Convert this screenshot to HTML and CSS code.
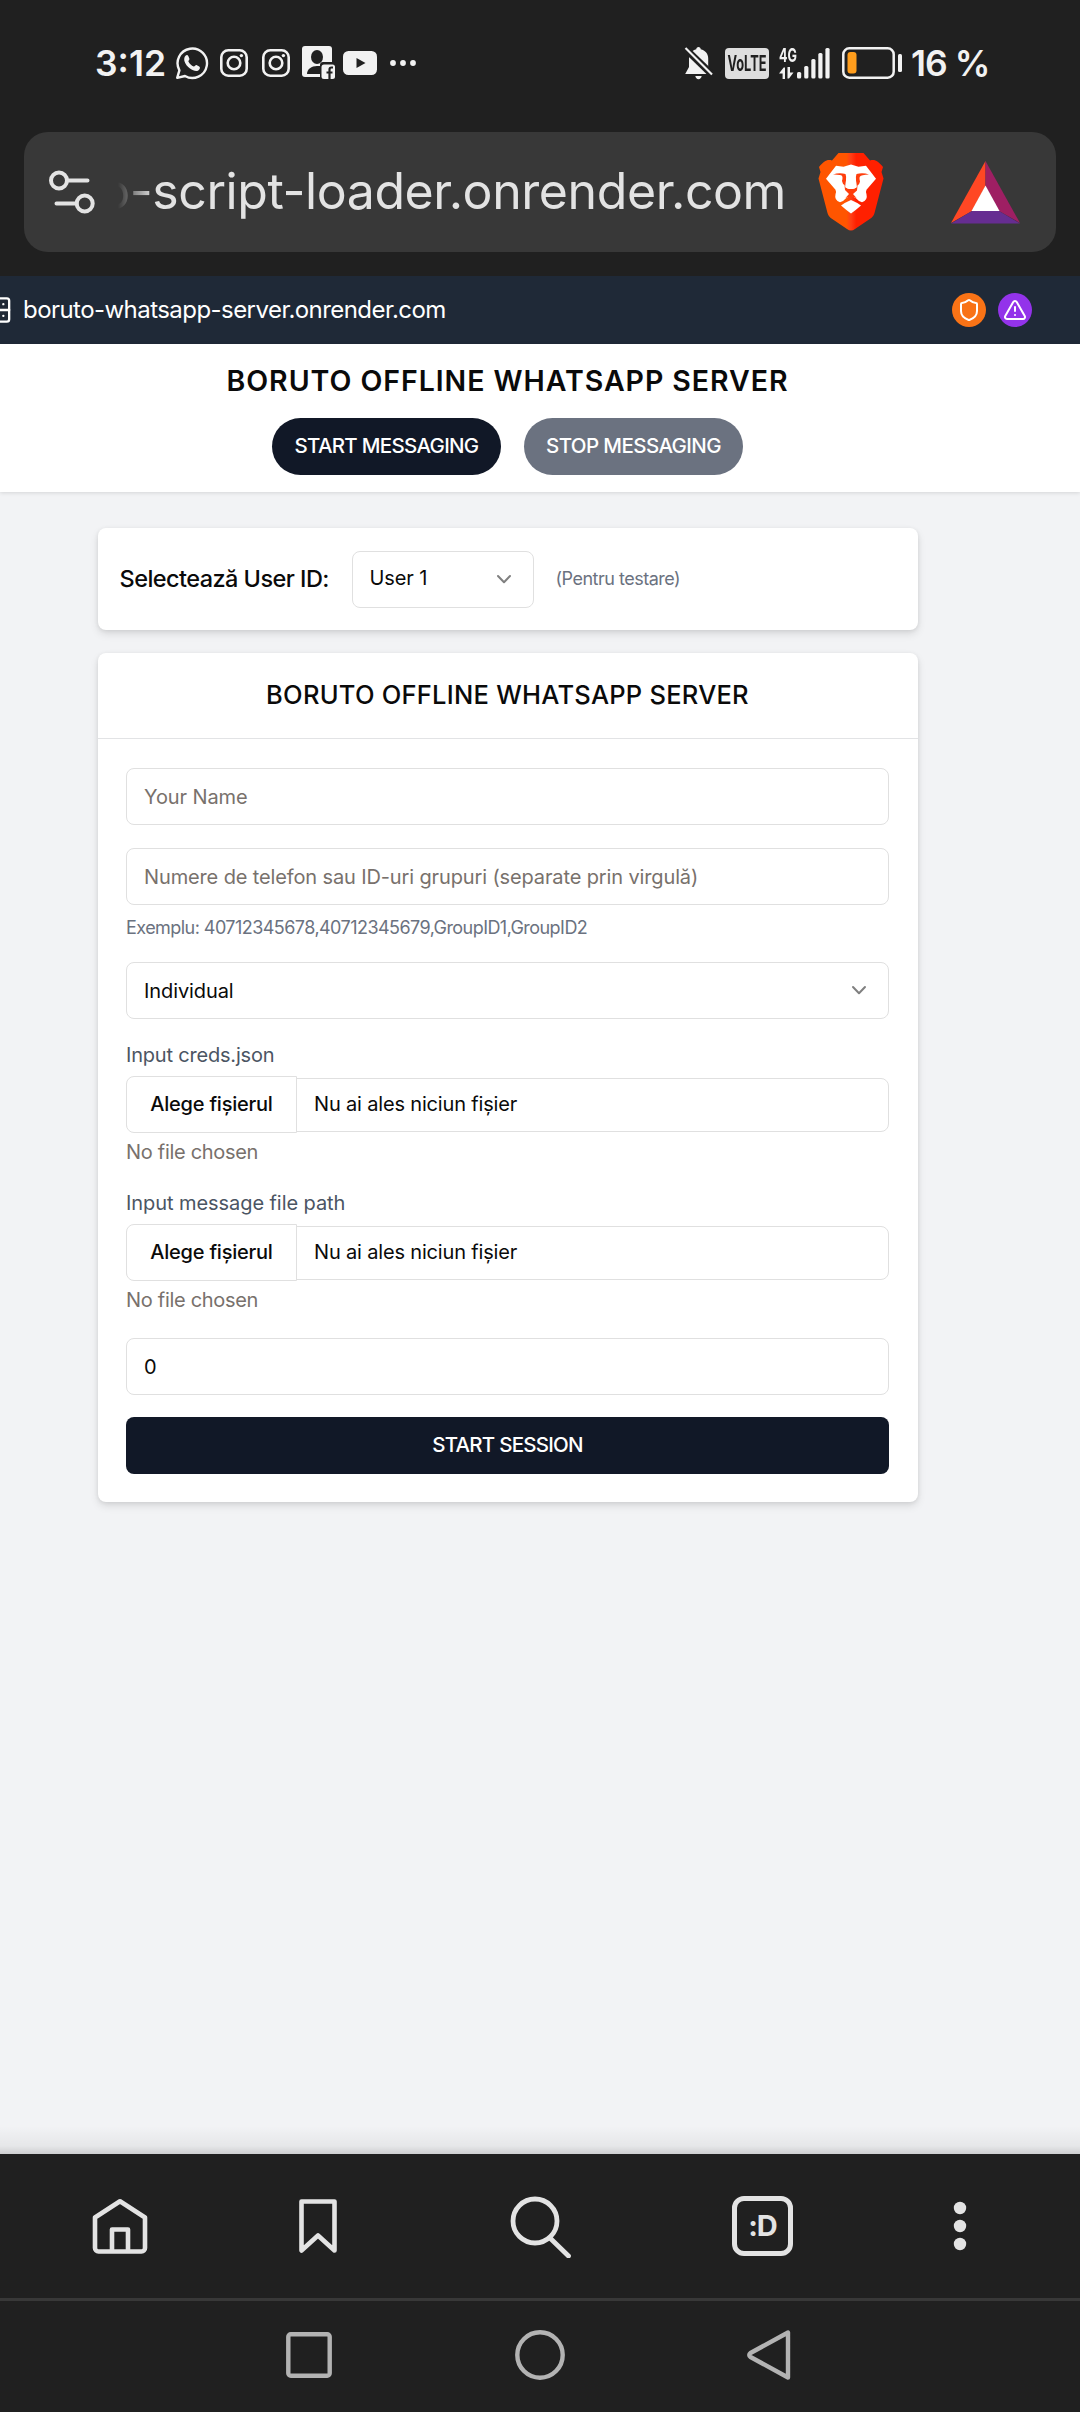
FILE: index.html
```html
<!DOCTYPE html>
<html lang="ro">
<head>
<meta charset="utf-8">
<title>Boruto Offline WhatsApp Server</title>
<link rel="stylesheet" href="styles.css">
</head>
<body>
<header class="status">
  <div class="status-left">
    <span class="clock">3:12</span>
    <svg width="34" height="34" viewBox="0 0 34 34" fill="none"><path d="M2.2 31.8 4.4 24.3A14.7 14.7 0 1 1 10 30z" stroke="#f2f2f2" stroke-width="2.4" stroke-linejoin="round"/><path d="M10.5 9.8c1.2-1.2 2.3-.8 2.9.5l1 2.400c.4 1-1.400 2-1 2.800 1.300 2.500 3 4 5.300 5 .9.4 1.800-1.800 2.800-1.400l2.700 1.400c1.400.8.6 3-.9 3.900-2.200 1.300-5.300.2-8.300-1.900-2.400-1.800-5-4.900-5.600-7.600-.4-1.900-.1-4 1.100-5.100z" fill="#f2f2f2"/></svg>
    <svg class="insta" width="28" height="28" viewBox="0 0 28 28" fill="none" stroke="#f2f2f2" stroke-width="2.600"><rect x="1.300" y="1.300" width="25.400" height="25.400" rx="7"/><circle cx="14" cy="14" r="6.300"/><circle cx="21.400" cy="6.600" r="1.700" fill="#f2f2f2" stroke="none"/></svg>
    <svg class="insta2" width="28" height="28" viewBox="0 0 28 28" fill="none" stroke="#f2f2f2" stroke-width="2.600"><rect x="1.300" y="1.300" width="25.400" height="25.400" rx="7"/><circle cx="14" cy="14" r="6.300"/><circle cx="21.400" cy="6.600" r="1.700" fill="#f2f2f2" stroke="none"/></svg>
    <svg class="contact" width="34" height="34" viewBox="0 0 34 34"><rect width="30" height="31" rx="3" fill="#f2f2f2"/><ellipse cx="15" cy="11" rx="6" ry="7" fill="#202020"/><path d="M5 28c0-5 4.500-8 10-8h15v8z" fill="#202020"/><rect x="18" y="16" width="17" height="19" rx="3" fill="#202020"/><rect x="19.500" y="18.500" width="13.500" height="14.500" rx="2.500" fill="#f2f2f2"/><path d="M31 21.500h-1.500c-1.500 0-2 .9-2 2.200V33M24.500 26.500h6" stroke="#202020" stroke-width="2.200" fill="none"/></svg>
    <svg class="tube" width="34" height="24" viewBox="0 0 34 24"><rect width="34" height="24" rx="5.500" fill="#f2f2f2"/><path d="m13.500 7 9 5-9 5z" fill="#202020"/></svg>
    <svg class="more" width="26" height="6" viewBox="0 0 26 6" fill="#f2f2f2"><circle cx="3" cy="3" r="2.900"/><circle cx="13" cy="3" r="2.900"/><circle cx="23" cy="3" r="2.900"/></svg>
  </div>
  <div class="status-right">
    <svg width="30" height="34" viewBox="0 0 30 34"><path d="M14.500 1c1.300 0 2.200 1 2.200 2.200 4.600 1 7.500 4.600 7.500 9.300v8.200l4 5.800v1.500h-27L5 21v-8.500C5 8 8 4 12.300 3.200 12.300 2 13.200 1 14.500 1zM11.300 30h6.400c-.3 2-1.600 3.200-3.200 3.200s-2.900-1.200-3.200-3.200z" fill="#f2f2f2"/><path d="m0 1.500 28 27" stroke="#202020" stroke-width="7"/><path d="M1.500 2 28 28.500" stroke="#f2f2f2" stroke-width="2.200"/></svg>
    <span class="volte"><span>VoLTE</span></span>
    <span class="net"><span class="net-type"><span>4G</span></span><svg width="15" height="12" viewBox="0 0 15 12"><path d="M6 12H3.600V6.500H0L4.700.6H6zM8.500 0H11v5.500h3.500L10 11.500H8.500z" fill="#f2f2f2"/></svg></span>
    <svg class="bars" width="33" height="32" viewBox="0 0 33 32" fill="#f2f2f2"><rect x="0" y="25" width="4.200" height="6.500" rx="1.500"/><rect x="7.200" y="19" width="4.200" height="12.500" rx="1.500"/><rect x="14.300" y="12" width="4.200" height="19.500" rx="1.500"/><rect x="21.300" y="6" width="4.200" height="25.500" rx="1.500"/><rect x="28.400" y="1" width="4.200" height="30.500" rx="1.500"/></svg>
    <svg class="battery" width="61" height="32" viewBox="0 0 61 32"><rect x="1.300" y="1.300" width="50.400" height="29.400" rx="6" fill="none" stroke="#f2f2f2" stroke-width="2.500"/><rect x="5.500" y="5" width="9" height="21.500" rx="3" fill="#ff9d1c"/><rect x="56" y="7" width="4" height="18" rx="1.500" fill="#f2f2f2"/></svg>
    <span class="percent">16 %</span>
  </div>
</header>

<div class="url-wrap">
  <div class="url">
    <svg class="tune" width="48" height="46" viewBox="0 0 48 46" fill="none" stroke="#e3e3e3" stroke-width="4" stroke-linecap="round"><circle cx="12" cy="11.500" r="8"/><path d="M20 11.500h20.500M9.500 34.500h20"/><circle cx="37.700" cy="34.500" r="8"/></svg>
    <div class="url-text"><span>o-script-loader.onrender.com</span></div>
    <svg class="lion" width="66" height="78" viewBox="0 0 66 78">
      <defs><linearGradient id="mane" x1="0" x2="1" y1="0" y2="0"><stop offset=".43" stop-color="#ff5500"/><stop offset=".5" stop-color="#ff3d16"/><stop offset=".58" stop-color="#ff2000"/></linearGradient></defs>
      <path d="M20.500 0h25l6.500 7.500c5-1.500 8 .5 13 6.500l-1.500 5 2 6.500L56.500 60c-1 3-2 4-4 5.500L37 76q-4 3-8 0L13.500 65.500c-2-1.500-3-2.500-4-5.500L.5 25.500l2-6.500L1 14c5-6 8-8 13-6.500z" fill="url(#mane)"/>
      <path d="M18 12.700l7.500 1 7.500-2.200 7.500 2.200 7.500-1 10 13-9.500 11q-1 2 0 4.500 1.500 6-4.500 8-3-.5-6-4L33 42.500l-5 2.700q-3 3.500-6 4-6-2-4.500-8 1-2.500 0-4.500L8 25.700z" fill="#fff"/>
      <path d="M33 47q6 2.500 10 5.500-4.500 4-10 8-5.500-4-10-8 4-3 10-5.500z" fill="#fff"/>
      <path d="M15 21.500q6-2 12.500-.5l.8 3.500-1 9.500 2 1.500q3.700 1 7.400 0l2-1.500-1-9.500.8-3.500q6.500-1.500 12.500.5-8 .3-9 2-1 1 0 5-.5 3-2.500 4l-.5 5-4 3.500 3.500 4-5.500-1.500-5.500 1.500 3.500-4L27 37l-.5-5q-2-1-2.500-4 1-4 0-5-1-1.700-9-1.500z" fill="#ff3d0c"/>
      <path d="M29.500 20h7.500l.8 5 .7 9.500q-5.500 2.500-11 0l.7-9.500z" fill="#fff"/>
    </svg>
    <svg class="bat" width="69" height="63" viewBox="0 0 69 63"><path d="M34.500 0v25L21 50 0 62z" fill="#ff4724"/><path d="M34.500 0v25L48 50l21 12z" fill="#9e1f63"/><path d="M0 62.500 21 50h27l21 12.500z" fill="#662d91"/><path d="M34.500 24.500 48.500 50h-28z" fill="#fff"/></svg>
  </div>
</div>

<main class="page">
  <nav class="site-nav">
    <svg class="server" width="29" height="28" viewBox="0 0 24 24" fill="none" stroke="#fff" stroke-width="2" stroke-linecap="round"><rect x="2" y="2" width="20" height="20" rx="2"/><path d="M2 12h20M17 7h.01M17 17h.01"/></svg>
    <span class="domain">boruto-whatsapp-server.onrender.com</span>
    <span class="dot orange"><svg width="24" height="24" viewBox="0 0 24 24" fill="none" stroke="#fff" stroke-width="2" stroke-linejoin="round"><path d="M20 13c0 5-3.500 7.500-7.660 8.950a1 1 0 0 1-.67-.01C7.500 20.500 4 18 4 13V6a1 1 0 0 1 1-1c2 0 4.500-1.200 6.240-2.720a1.170 1.170 0 0 1 1.520 0C14.510 3.810 17 5 19 5a1 1 0 0 1 1 1z"/></svg></span>
    <span class="dot purple"><svg width="24" height="24" viewBox="0 0 24 24" fill="none" stroke="#fff" stroke-width="2" stroke-linejoin="round" stroke-linecap="round"><path d="m21.730 18-8-14a2 2 0 0 0-3.480 0l-8 14A2 2 0 0 0 4 21h16a2 2 0 0 0 1.730-3M12 9v4M12 17h.01"/></svg></span>
  </nav>

  <section class="hero">
    <h1>BORUTO OFFLINE WHATSAPP SERVER</h1>
    <div class="hero-actions">
      <button class="pill start">START MESSAGING</button>
      <button class="pill stop">STOP MESSAGING</button>
    </div>
  </section>

  <div class="container">
    <section class="card user-card">
      <span class="user-label">Selectează User ID:</span>
      <div class="field user-select"><span>User 1</span><svg width="16" height="11" viewBox="0 0 16 11" fill="none" stroke="#808080" stroke-width="2" stroke-linecap="round" stroke-linejoin="round"><path d="m2 2 6 6.300L14 2"/></svg></div>
      <span class="hint">(Pentru testare)</span>
    </section>

    <section class="card">
      <h2>BORUTO OFFLINE WHATSAPP SERVER</h2>
      <form class="form">
        <div class="field muted">Your Name</div>
        <div class="field muted numbers">Numere de telefon sau ID-uri grupuri (separate prin virgulă)</div>
        <p class="example">Exemplu: 40712345678,40712345679,GroupID1,GroupID2</p>
        <div class="field mode"><span>Individual</span><svg width="16" height="11" viewBox="0 0 16 11" fill="none" stroke="#808080" stroke-width="2" stroke-linecap="round" stroke-linejoin="round"><path d="m2 2 6 6.300L14 2"/></svg></div>
        <div class="file">
          <label>Input creds.json</label>
          <div class="file-row"><span class="file-btn">Alege fișierul</span><span class="file-name">Nu ai ales niciun fișier</span></div>
          <p class="no-file">No file chosen</p>
        </div>
        <div class="file">
          <label class="wide">Input message file path</label>
          <div class="file-row"><span class="file-btn">Alege fișierul</span><span class="file-name">Nu ai ales niciun fișier</span></div>
          <p class="no-file">No file chosen</p>
        </div>
        <div class="field count">0</div>
        <button type="button" class="submit">START SESSION</button>
      </form>
    </section>
  </div>
</main>

<footer class="toolbar">
  <svg width="56" height="56" viewBox="0 0 56 56" fill="none" stroke="#e3e3e3" stroke-width="4.600" stroke-linejoin="round"><path d="M3 19.500 28 3.300l25 16.200V50a3.500 3.500 0 0 1-3.500 3.500h-43A3.500 3.500 0 0 1 3 50zM20 53V31.500h16V53"/></svg>
  <svg class="bookmark" width="40" height="56" viewBox="0 0 40 56" fill="none" stroke="#e3e3e3" stroke-width="4.600" stroke-linejoin="round"><path d="M3.500 3.500h33v49L20 37.500l-16.500 15z"/></svg>
  <svg class="search" width="62" height="62" viewBox="0 0 62 62" fill="none" stroke="#e3e3e3" stroke-width="4.800" stroke-linecap="round"><circle cx="25" cy="25" r="22"/><path d="m41 43 17.500 17"/></svg>
  <span class="tabs">:D</span>
  <svg class="menu" width="14" height="50" viewBox="0 0 14 50" fill="#e3e3e3"><circle cx="7" cy="7" r="6.200"/><circle cx="7" cy="25" r="6.200"/><circle cx="7" cy="43" r="6.200"/></svg>
</footer>
<div class="system">
  <svg width="46" height="46" viewBox="0 0 46 46" fill="none" stroke="#b3b3b3" stroke-width="4.400"><rect x="2.300" y="2.300" width="41.400" height="41.400" rx="2.500"/></svg>
  <svg class="home-btn" width="50" height="50" viewBox="0 0 50 50" fill="none" stroke="#b3b3b3" stroke-width="4.400"><circle cx="25" cy="25" r="22.700"/></svg>
  <svg class="back" width="44" height="50" viewBox="0 0 44 50" fill="none" stroke="#b3b3b3" stroke-width="4.400" stroke-linejoin="round"><path d="M41 2.500v45L3.500 27q-2.500-2 0-4z"/></svg>
</div>
</body>
</html>
```
FILE: styles.css
```css
* { box-sizing: border-box; }
body {
  margin: 0;
  width: 1080px;
  height: 2412px;
  overflow: hidden;
  display: flex;
  flex-direction: column;
  background: #202020;
  color: #0a0a0a;
  font-family: Inter, "Noto Sans", sans-serif;
  font-size: 20px;
}
svg { display: block; flex: none; }
h1, h2, p { margin: 0; }
button { border: 0; font: inherit; color: #fff; }
span, h1, h2, p, button, label { white-space: nowrap; }

/* status bar */
.status {
  height: 126px;
  display: flex;
  align-items: center;
  justify-content: space-between;
  padding: 0 91px 0 95px;
  color: #f2f2f2;
}
.status-left, .status-right { display: flex; align-items: center; }
.clock { width: 80px; font-size: 35.500px; font-weight: 600; }
.insta { margin-left: 11px; }
.insta2 { margin-left: 14px; }
.contact { margin-left: 12px; }
.tube { margin-left: 7px; }
.more { margin-left: 13px; }
.volte {
  width: 44px;
  height: 31px;
  margin-left: 11px;
  display: flex;
  align-items: center;
  justify-content: center;
  border-radius: 4px;
  background: #dedede;
  color: #202020;
}
.volte span { font-size: 21px; font-weight: 700; transform: scaleX(.61); }
.net { width: 18px; margin-left: 10px; display: flex; flex-direction: column; gap: 3px; }
.net-type { height: 16px; font-size: 19px; font-weight: 700; line-height: 16px; }
.net-type span { display: inline-block; transform: scaleX(.66); transform-origin: left; }
.battery { margin-left: 12px; }
.percent { width: 78px; margin-left: 8px; font-size: 35.500px; font-weight: 600; letter-spacing: -1px; }

/* address bar */
.url-wrap { height: 150px; padding: 6px 24px 0; }
.url {
  height: 120px;
  border-radius: 24px;
  background: #383838;
  display: flex;
  align-items: center;
  padding-left: 23px;
}
.url-text {
  width: 668px;
  margin: 0 0 3px 23px;
  display: flex;
  justify-content: flex-end;
  overflow: hidden;
  color: #e3e3e3;
  font-size: 50px;
  line-height: 62px;
  letter-spacing: -.42px;
  -webkit-mask-image: linear-gradient(90deg, transparent 0, #000 36px);
  mask-image: linear-gradient(90deg, transparent 0, #000 36px);
}
.lion { margin-left: 32px; }
.bat { margin-left: 67px; margin-top: 0; }

/* page content */
.page {
  height: 1878px;
  background: linear-gradient(180deg, rgba(0,0,0,0) 1850px, rgba(0,0,0,.05) 1870px, rgba(0,0,0,.15) 1878px), #f2f3f5;
}
.site-nav {
  height: 68px;
  display: flex;
  align-items: center;
  background: #1f2937;
  color: #fff;
}
.server { margin-left: -17px; }
.domain { flex: 1; margin: 0 0 2px 11px; font-size: 24px; letter-spacing: -.55px; }
.dot {
  width: 34px;
  height: 34px;
  border-radius: 50%;
  display: flex;
  align-items: center;
  justify-content: center;
}
.orange { background: #f97316; margin-right: 12px; }
.purple { background: #9333ea; margin-right: 48px; }
.hero {
  height: 148px;
  padding: 20px 65px 0 0;
  display: flex;
  flex-direction: column;
  align-items: center;
  background: #fff;
  box-shadow: 0 1px 4px rgba(0,0,0,.12);
}
h1 { font-size: 28.500px; font-weight: 600; line-height: 34px; letter-spacing: .95px; }
.hero-actions { display: flex; gap: 23px; margin-top: 20px; }
.pill {
  width: 229px;
  height: 57px;
  padding: 0 0 2px;
  border-radius: 29px;
  font-weight: 500;
  font-size: 20.500px;
  letter-spacing: -.7px;
}
.start { background: #111827; }
.stop { width: 219px; background: #6b7280; letter-spacing: -.6px; }
.container {
  width: 820px;
  margin: 36px 0 0 97.500px;
  display: flex;
  flex-direction: column;
  gap: 23px;
}
.card {
  border-radius: 8px;
  background: #fff;
  box-shadow: 0 4px 8px rgba(0,0,0,.1), 0 1px 4px rgba(0,0,0,.08);
}
.user-card { height: 102px; display: flex; align-items: center; padding-left: 22px; }
.user-label { width: 232px; padding-bottom: 1px; font-size: 23.500px; font-weight: 500; letter-spacing: -.55px; }
.field {
  height: 57px;
  padding: 0 17px;
  display: flex;
  align-items: center;
  border: 1px solid #e0e0e0;
  border-radius: 8px;
  background: #fff;
  letter-spacing: -.1px;
}
.user-select { width: 182px; padding-bottom: 3px; justify-content: space-between; }
.user-select svg { margin: 3px 4px 0 0; }
.hint { margin-left: 22px; padding-bottom: 1px; font-size: 18px; color: #6b7280; letter-spacing: -.5px; }
h2 {
  height: 86px;
  border-bottom: 1px solid #e2e3e5;
  font-size: 25.500px;
  font-weight: 500;
  line-height: 83px;
  text-align: center;
  letter-spacing: .25px;
}
.form { padding: 29px 28.500px 28px; display: flex; flex-direction: column; }
.muted { color: #78716c; }
.numbers { margin-top: 23px; letter-spacing: -.13px; }
.example { margin-top: 10px; height: 24px; font-size: 18px; line-height: 26px; color: #6b7280; letter-spacing: -.55px; }
.mode { margin-top: 23px; justify-content: space-between; }
.mode svg { margin-right: 4px; }
.file { height: 148px; padding-top: 22px; }
.file label { display: block; height: 28px; line-height: 28px; color: #4b5563; letter-spacing: -.2px; }
.file label.wide { letter-spacing: -.07px; }
.file-row {
  height: 54px;
  margin-top: 9px;
  display: flex;
  align-items: center;
  border: 1px solid #e0e0e0;
  border-radius: 8px;
}
.file-btn {
  width: 171px;
  height: 57px;
  margin: -1px 0 0 -1px;
  flex: none;
  border: 1px solid #e0e0e0;
  border-radius: 8px 0 0 8px;
  background: #fff;
  font-weight: 500;
  line-height: 54px;
  text-align: center;
  letter-spacing: -.22px;
}
.file-name { padding: 0 0 2px 17px; letter-spacing: -.17px; }
.no-file { margin-top: 6px; line-height: 28px; color: #78716c; letter-spacing: -.3px; }
.count { margin-top: 23px; }
.submit {
  height: 57px;
  margin-top: 22px;
  padding: 0 0 3px;
  border-radius: 8px;
  background: #111827;
  font-size: 20.500px;
  font-weight: 500;
  letter-spacing: -.75px;
}

/* browser toolbar */
.toolbar {
  height: 147px;
  border-bottom: 3px solid #383838;
  display: flex;
  align-items: center;
  padding: 0 0 1px 92px;
}
.bookmark { margin-left: 150px; }
.search { margin: 2px 0 0 172px; }
.tabs {
  width: 61px;
  height: 60px;
  margin-left: 160px;
  border: 5px solid #e3e3e3;
  border-radius: 12px;
  color: #e3e3e3;
  font-size: 29px;
  font-weight: 700;
  line-height: 49px;
  text-align: center;
  letter-spacing: -1px;
}
.menu { margin-left: 160px; }
.system { height: 111px; display: flex; align-items: center; padding: 0 0 3px 286px; }
.home-btn { margin-left: 183px; }
.back { margin-left: 182px; }
```
